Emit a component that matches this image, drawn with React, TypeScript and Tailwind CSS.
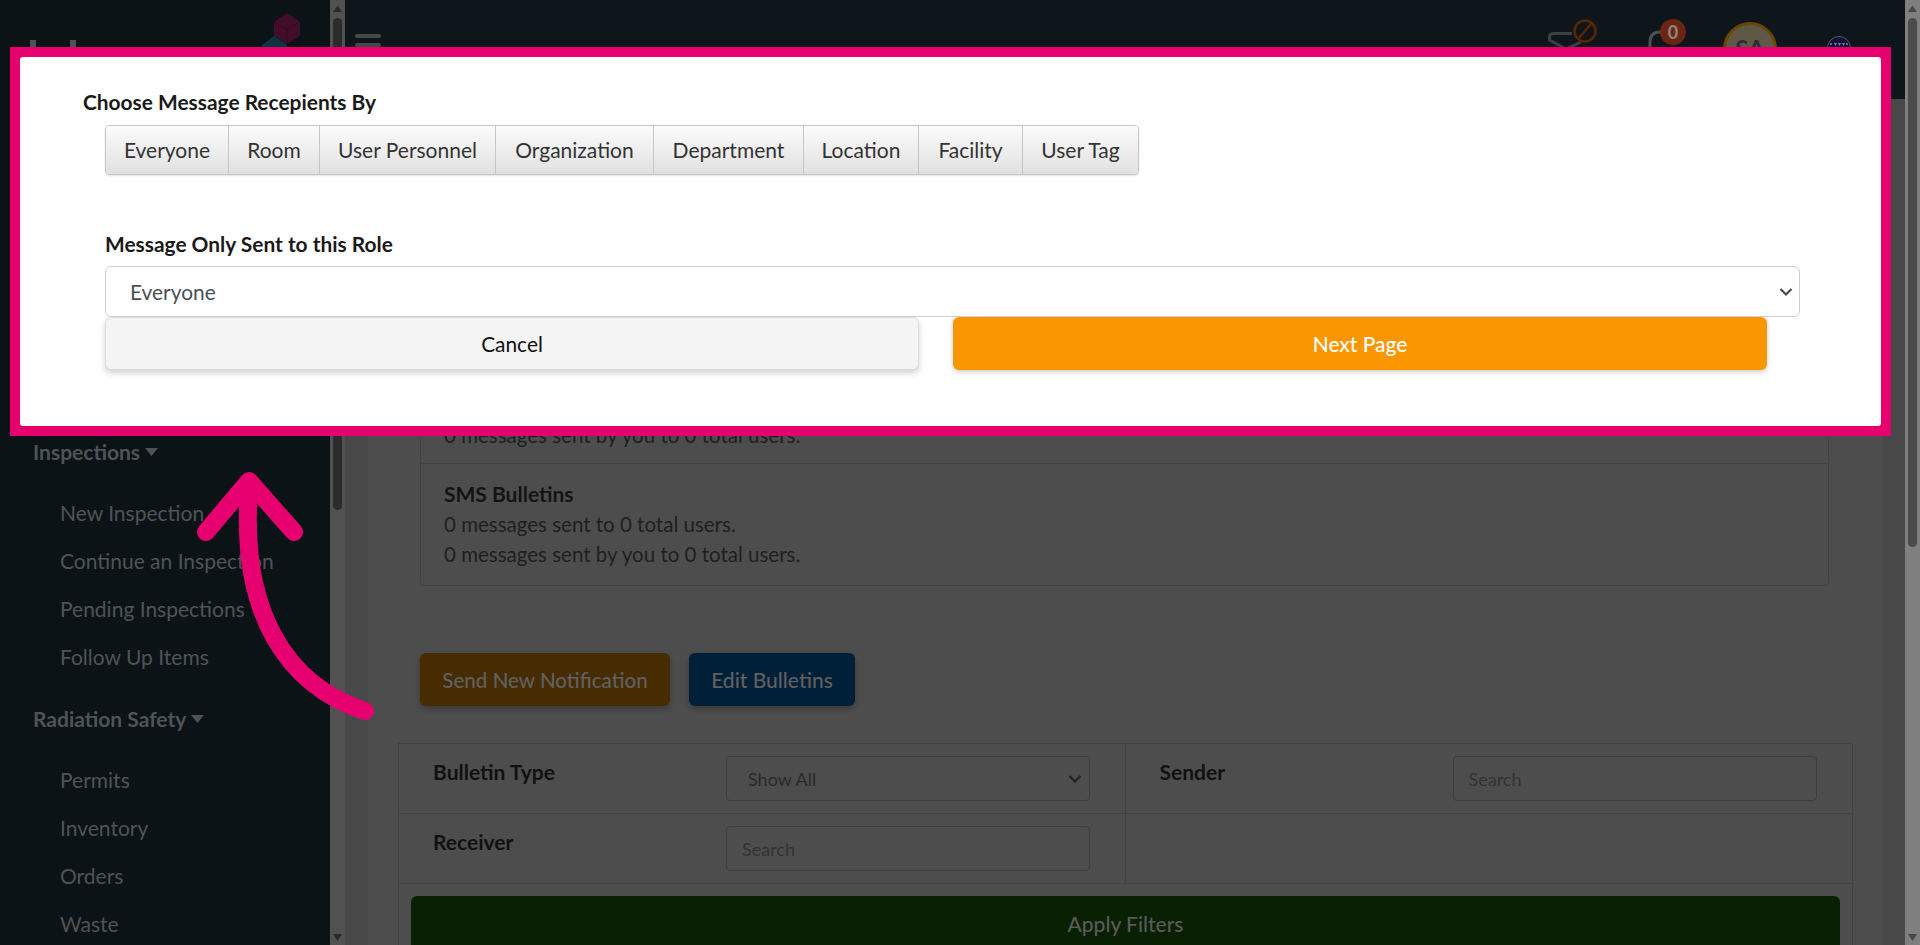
const sideGroups = [
  {
    title: "Inspections",
    items: ["New Inspection", "Continue an Inspection", "Pending Inspections", "Follow Up Items"],
  },
  {
    title: "Radiation Safety",
    items: ["Permits", "Inventory", "Orders", "Waste"],
  },
];

const recipientTabs = [
  { label: "Everyone", width: "w-[122px]" },
  { label: "Room", width: "w-[91px]" },
  { label: "User Personnel", width: "w-[176px]" },
  { label: "Organization", width: "w-[158px]" },
  { label: "Department", width: "w-[150px]" },
  { label: "Location", width: "w-[115px]" },
  { label: "Facility", width: "w-[104px]" },
  { label: "User Tag", width: "w-[116px]" },
];

const ScrollBar = ({ thumbEnd, track, thumb, arrow }: { thumbEnd: string; track: string; thumb: string; arrow: string }) => (
  <div className={`relative w-[15px] shrink-0 h-full ${track}`}>
    <svg viewBox="0 0 15 15" className="absolute top-[2px] left-0 w-[15px] h-[15px]">
      <path d="M7.5 3.5 L12 10 H3 Z" fill={arrow} />
    </svg>
    <div className={`absolute left-[3px] right-[3px] top-[18px] rounded-full ${thumbEnd} ${thumb}`} />
    <svg viewBox="0 0 15 15" className="absolute bottom-[1px] left-0 w-[15px] h-[15px]">
      <path d="M7.5 12 L12 5 H3 Z" fill={arrow} />
    </svg>
  </div>
);

const Sidebar = () => (
  <aside className="w-[330px] shrink-0 h-full bg-[#0b1317] text-[#505355] overflow-hidden">
    <div className="h-[99px]">
      <svg width="330" height="99" viewBox="0 0 330 99">
        <rect x="30" y="40" width="6" height="40" fill="#505050" />
        <rect x="70" y="40" width="6" height="40" fill="#505050" />
        <path d="M274 22 L287 13 L300 22 L300 36 L287 44 L274 36 Z" fill="#420d28" />
        <path d="M274 22 L287 29 L300 22 M287 29 V44" fill="none" stroke="#2e0a1e" strokeWidth="0.7" />
        <path d="M262 45 L274 36 L287 45 L287 60 L262 60 Z" fill="#0e3640" />
      </svg>
    </div>
    <nav className="pt-[338px]">
      {sideGroups.map((group) => (
        <div key={group.title} className="mb-[23px]">
          <div className="pl-[33px] mb-[22px] h-[30px] flex items-center gap-[5px] font-bold text-[21px] leading-[30px]">
            {group.title}
            <svg width="13" height="8" viewBox="0 0 13 8">
              <path d="M0 0 H13 L6.5 8 Z" fill="#505355" />
            </svg>
          </div>
          {group.items.map((item) => (
            <div key={item} className="pl-[60px] h-12 flex items-center text-[21px]">
              {item}
            </div>
          ))}
        </div>
      ))}
    </nav>
  </aside>
);

const TopBar = () => (
  <header className="h-[99px] shrink-0 bg-[#0f161b] flex pl-[10px] pr-[54px] overflow-hidden">
    <div className="mt-[34px] w-[26px] flex flex-col gap-[5px]">
      <div className="h-1 bg-[#484848] rounded-sm" />
      <div className="h-1 bg-[#484848] rounded-sm" />
      <div className="h-1 bg-[#484848] rounded-sm" />
    </div>
    <div className="ml-auto flex items-start">
      <svg width="50" height="60" viewBox="0 0 50 60" className="mt-[18px]">
        <path d="M24 15.5 H6 Q1.5 15.5 1.5 19 V22 L18 31 L33 24" fill="none" stroke="#3a4146" strokeWidth="3" strokeLinejoin="round" />
        <circle cx="37" cy="13" r="10.5" fill="#0f161b" stroke="#5a2600" strokeWidth="2.5" />
        <path d="M31 20 L43 6" stroke="#5a2600" strokeWidth="2.5" />
      </svg>
      <div className="relative ml-[50px] w-[34px] h-[60px] mt-[18px]">
        <svg width="34" height="60" viewBox="0 0 34 60">
          <path d="M2 34 V24 Q2 14 12 14 H20" fill="none" stroke="#4a5156" strokeWidth="3" />
        </svg>
        <div className="absolute left-[12px] top-[1px] w-[26px] h-[26px] rounded-full bg-[#6b2510] text-[#8a8a8a] text-[18px] font-bold flex items-center justify-center">
          0
        </div>
      </div>
      <div className="ml-[41px] mt-[22px] w-[54px] h-[54px] rounded-full border-[3px] border-[#6b4600] bg-[#5f5846] text-[#2c2c3a] text-[24px] font-bold flex items-center justify-center">
        SA
      </div>
      <svg width="24" height="24" viewBox="0 0 24 24" className="ml-[50px] mt-[36px]">
        <circle cx="12" cy="12" r="11.5" fill="#12123a" stroke="#55555f" strokeWidth="1" />
        <path d="M7 7 L10 7 L8.5 10 Z M11 7 L14 7 L12.5 10 Z M15 7 L18 7 L16.5 10 Z" fill="#7f7f98" />
        <circle cx="4" cy="8" r="1" fill="#7f7f98" />
        <circle cx="20" cy="8" r="1" fill="#7f7f98" />
      </svg>
    </div>
  </header>
);

const StatRow = ({ title, last }: { title: string; last?: boolean }) => (
  <div className={`px-[23px] ${last ? "pt-[15px] pb-[16px]" : "pt-[16px] pb-[13px] border-b border-[#434343]"}`}>
    <div className="font-bold text-[21px] text-[#141414]">{title}</div>
    <div className="text-[20.5px]">0 messages sent to 0 total users.</div>
    <div className="text-[20.5px]">0 messages sent by you to 0 total users.</div>
  </div>
);

const Chevron = ({ color }: { color: string }) => (
  <svg width="14" height="10" viewBox="0 0 14 10" className="absolute right-[7px] top-1/2 -translate-y-1/2 pointer-events-none">
    <path d="M1.5 2 L7 7.5 L12.5 2" fill="none" stroke={color} strokeWidth="2.2" />
  </svg>
);

const FilterCell = ({ label, children, right }: { label?: string; children?: React.ReactNode; right?: boolean }) => (
  <div className={`h-[70px] flex pl-[34px] pt-[12px] border-b border-[#434343] ${right ? "" : "border-r"}`}>
    <div className="w-[293px] shrink-0 font-bold text-[21px] text-[#111] leading-[30px] pt-px">{label}</div>
    {children}
  </div>
);

const SearchBox = () => (
  <div className="w-[364px] h-[45px] rounded border border-[#3e3e3e] bg-[#4d4d4d] pl-[15px] flex items-center text-[18px] text-[#333]">
    Search
  </div>
);

const Main = () => (
  <div className="flex-1 min-w-0 h-full flex flex-col">
    <TopBar />
    <div className="flex-1 min-h-0 flex overflow-hidden">
      <div className="w-[23px] shrink-0 bg-[#484848]" />
      <main className="flex-1 min-w-0 bg-[#4d4d4d] text-[#1f1f1f] text-[20px] leading-[30px]">
        <section className="mt-[244px] ml-[52px] mr-[54px] border border-[#434343] rounded">
          <StatRow title="Email Bulletins" />
          <StatRow title="SMS Bulletins" last />
        </section>
        <div className="mt-[67px] ml-[52px] flex gap-[19px]">
          <button className="w-[250px] h-[53px] rounded-md bg-[#462c00] text-[#606060] text-[20.6px] font-medium shadow-[0_3px_6px_rgba(0,0,0,0.25)]">
            Send New Notification
          </button>
          <button className="w-[166px] h-[53px] rounded-md bg-[#001f38] text-[#606060] text-[21px] font-medium shadow-[0_3px_6px_rgba(0,0,0,0.25)]">
            Edit Bulletins
          </button>
        </div>
        <section className="mt-[37px] mx-[30px] border-x border-t border-[#434343]">
          <div className="grid grid-cols-2">
            <FilterCell label="Bulletin Type">
              <div className="relative w-[364px] h-[45px] rounded border border-[#3e3e3e] bg-[#4d4d4d] pl-[21px] flex items-center text-[18px] text-[#2a2a2a]">
                Show All
                <Chevron color="#222" />
              </div>
            </FilterCell>
            <FilterCell label="Sender" right>
              <SearchBox />
            </FilterCell>
            <FilterCell label="Receiver">
              <SearchBox />
            </FilterCell>
            <FilterCell right />
          </div>
          <div className="mt-[12px] mx-3">
            <button className="w-full h-[56px] rounded-md bg-[#092002] text-[#5a5a5a] text-[21px] font-medium">Apply Filters</button>
          </div>
        </section>
      </main>
      <div className="w-[22px] shrink-0 bg-[#484848]" />
    </div>
  </div>
);

const RecipientDialog = () => (
  <div className="absolute left-[10px] top-[47px] w-[1881px] h-[389px] bg-[#e6006f] p-[10px]">
    <div className="h-full bg-white rounded-[3px] pt-[30px] pl-[85px] text-[20.9px] leading-[30px] text-[#1a1a1a]">
      <h2 className="-ml-[22px] font-bold">Choose Message Recepients By</h2>
      <div className="mt-[8px] inline-flex h-[50px] rounded border border-[#c6c6c6] shadow-[0_1px_2px_rgba(0,0,0,0.12)] overflow-hidden align-top text-[21px]">
        {recipientTabs.map((tab, i) => (
          <div
            key={tab.label}
            className={`${tab.width} flex items-center justify-center bg-gradient-to-b from-[#fbfbfb] to-[#e1e1e1] text-[#333] ${
              i > 0 ? "border-l border-[#c6c6c6]" : ""
            }`}
          >
            {tab.label}
          </div>
        ))}
      </div>
      <label className="block mt-[54px] font-bold">Message Only Sent to this Role</label>
      <div className="relative mt-[7px] w-[1695px] h-[51px]">
        <select
          defaultValue="Everyone"
          className="w-full h-full appearance-none rounded-md border border-[#cfcfcf] bg-white pl-[24px] text-[#4a4f55] outline-none"
        >
          <option>Everyone</option>
        </select>
        <Chevron color="#4a4a4a" />
      </div>
      <div className="flex gap-[34px]">
        <button className="w-[814px] h-[53px] rounded-md border border-[#dcdcdc] bg-[#f4f4f4] text-[#111] shadow-[0_3px_6px_rgba(0,0,0,0.18)]">
          Cancel
        </button>
        <button className="w-[814px] h-[53px] rounded-md bg-[#fa9600] text-white font-medium shadow-[0_2px_5px_rgba(0,0,0,0.2)]">
          Next Page
        </button>
      </div>
    </div>
  </div>
);

const PointerArrow = () => (
  <svg width="1920" height="945" viewBox="0 0 1920 945" className="absolute inset-0 pointer-events-none">
    <path
      d="M365 711 C285 685 240 610 249 492 M206 532 L249 481 L294 532"
      fill="none"
      stroke="#e6006f"
      strokeWidth="18"
      strokeLinecap="round"
      strokeLinejoin="round"
    />
  </svg>
);

export default function App() {
  return (
    <div className="relative w-[1920px] h-[945px] overflow-hidden flex font-['Lato','Liberation_Sans',sans-serif]">
      <Sidebar />
      <ScrollBar track="bg-[#515151]" thumb="bg-[#2c2c2c]" arrow="#2a2a2a" thumbEnd="h-[492px]" />
      <Main />
      <ScrollBar track="bg-[#7f7f7f]" thumb="bg-[#4b4b4b]" arrow="#474747" thumbEnd="h-[529px]" />
      <RecipientDialog />
      <PointerArrow />
    </div>
  );
}
